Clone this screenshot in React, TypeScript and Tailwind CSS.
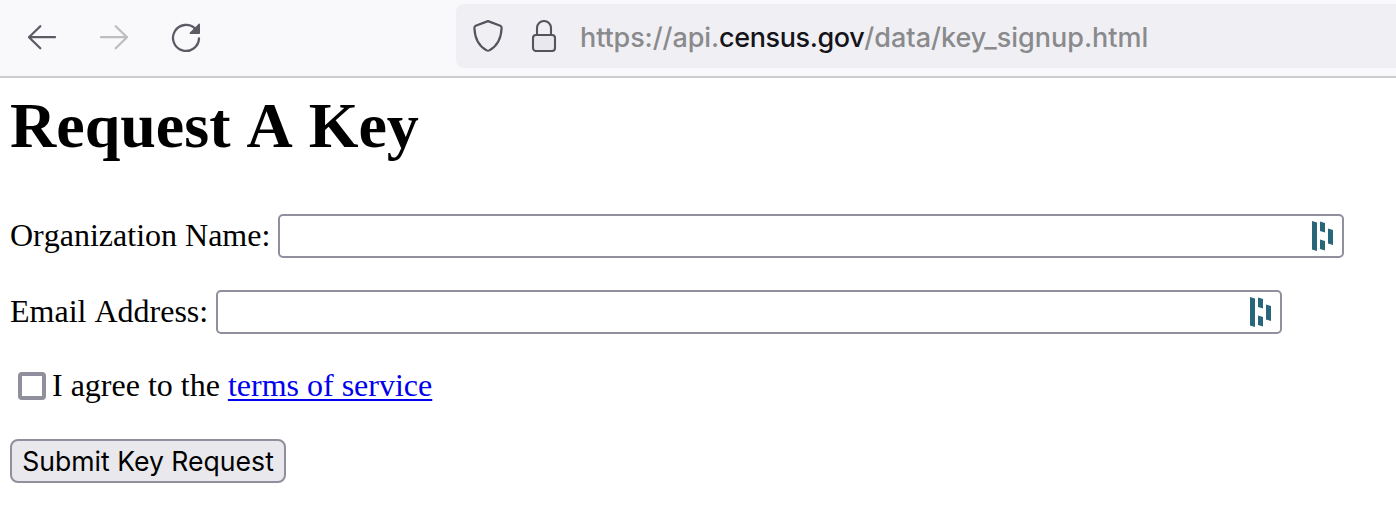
import { useState } from "react";

function BackIcon() {
  return (
    <svg className="h-8 w-8" viewBox="0 0 32 32" fill="none" stroke="#5b5b66" strokeWidth="2.3" strokeLinecap="round" strokeLinejoin="round">
      <path d="M29 16.2H3M14.3 5.200L3 16.200l11.3 11" />
    </svg>
  );
}

function ForwardIcon() {
  return (
    <svg className="h-8 w-8" viewBox="0 0 32 32" fill="none" stroke="#bdbdc0" strokeWidth="2.3" strokeLinecap="round" strokeLinejoin="round">
      <path d="M3 16.2h26M17.7 5.200L29 16.200 17.7 27.200" />
    </svg>
  );
}

function ReloadIcon() {
  return (
    <svg className="h-8 w-8" viewBox="0 0 32 32" fill="none">
      <path d="M25.2 7.700A13 13 0 1 0 29 17.400" stroke="#5b5b66" strokeWidth="2.3" strokeLinecap="round" />
      <path d="M30 3.600v8.600a.7.7 0 0 1-.7.7h-8.800c-.9 0-1.200-.9-.6-1.500l8.600-8.500c.6-.6 1.500-.2 1.500.7z" fill="#5b5b66" />
    </svg>
  );
}

function ShieldIcon() {
  return (
    <svg className="h-8 w-8" viewBox="0 0 32 32" fill="none" stroke="#54545c" strokeWidth="2.2" strokeLinejoin="round">
      <path d="M16 1.1L28.3 5.8Q29.7 6.4 29.6 8C29.2 19.5 24.5 26.5 17.3 30.4Q16 31.1 14.7 30.4C7.500 26.5 2.800 19.500 2.400 8Q2.300 6.400 3.700 5.800Z" />
    </svg>
  );
}

function LockIcon() {
  return (
    <svg className="h-8 w-8" viewBox="0 0 32 32" fill="none" stroke="#54545c" strokeWidth="2.1">
      <rect x="5" y="15" width="22" height="16" rx="3" fill="#e9e9ed" />
      <path d="M9 15V8a7 7 0 0 1 14 0v7" />
    </svg>
  );
}

function PasswordManagerIcon() {
  return (
    <svg className="h-[30px] w-[22px]" viewBox="0 0 22 30" fill="#2a6679">
      <path d="M0 0l5 1.500v28.500L0 28.500zM8 .500l5 1.500v9.500L8 10zM8 18.500l5 1.500v9.500L8 28zM16 7.500L21 9v15l-5-1.500z" />
    </svg>
  );
}

function TextField({ id, label }: { id: string; label: string }) {
  return (
    <div className="flex h-11 items-center">
      <label htmlFor={id} className="mr-2 pb-[3px] whitespace-pre [font-kerning:none]">
        {label}
      </label>
      <div className="flex h-11 w-[1066px] shrink-0 items-center rounded-[5px] border-2 border-[#8f8f9d] bg-white pr-2">
        <input id={id} type="text" className="h-full min-w-0 flex-1 bg-transparent px-2 outline-none" />
        <PasswordManagerIcon />
      </div>
    </div>
  );
}

export default function App() {
  const [agreed, setAgreed] = useState(false);

  return (
    <div className="h-[514px] w-[1396px] overflow-hidden bg-white text-black">
      <header className="flex h-[78px] items-start border-b-2 border-[#cccccc] bg-[#f9f9fb] pt-1 pl-[26px]">
        <nav className="flex h-[66px] w-[430px] shrink-0 items-center gap-10">
          <button aria-label="Back"><BackIcon /></button>
          <button aria-label="Forward"><ForwardIcon /></button>
          <button aria-label="Reload"><ReloadIcon /></button>
        </nav>
        <div className="flex h-16 flex-1 items-center rounded-l-lg bg-[#f0f0f4] pl-4">
          <ShieldIcon />
          <span className="ml-6"><LockIcon /></span>
          <span className="ml-5 whitespace-nowrap pt-1 font-['Inter',sans-serif] text-[27px] leading-8 font-[450] text-[#8a8a8d]">
            <span className="tracking-[-0.1px]">https://api.</span>
            <span className="tracking-[-0.4px] text-[#15141a]">census.gov</span>
            /data/key_signup.html
          </span>
        </div>
      </header>
      <main className="pl-[10px] font-['Liberation_Serif',serif] text-[32px] leading-[38px]">
        <h1 className="pt-[11px] pb-0.5 text-[64px] leading-[74px] font-bold [font-kerning:none]">Request A Key</h1>
        <form className="mt-[49px]" onSubmit={(event) => event.preventDefault()}>
          <TextField id="organization" label="Organization Name:" />
          <div className="mt-8">
            <TextField id="email" label="Email Address:" />
          </div>
          <div className="mt-[33px] flex h-[38px] items-center pl-2">
            <input
              id="agree"
              type="checkbox"
              checked={agreed}
              onChange={(event) => setAgreed(event.target.checked)}
              className="h-7 w-7 appearance-none rounded-[4px] border-4 border-[#8f8f9d] bg-white checked:bg-[#0060df]"
            />
            <label htmlFor="agree" className="ml-1.5 pb-0.5 whitespace-pre">I agree to the </label>
            <a href="#terms" className="pb-0.5 text-[#0000ee] underline decoration-2 underline-offset-[3px]">terms of service</a>
          </div>
          <button type="submit" className="mt-[34px] flex h-11 w-[276px] items-center justify-center rounded-lg border-2 border-[#8f8f9d] bg-[#e9e9ed] font-['Inter',sans-serif] text-[26.600px] whitespace-nowrap">
            Submit Key Request
          </button>
        </form>
      </main>
    </div>
  );
}
